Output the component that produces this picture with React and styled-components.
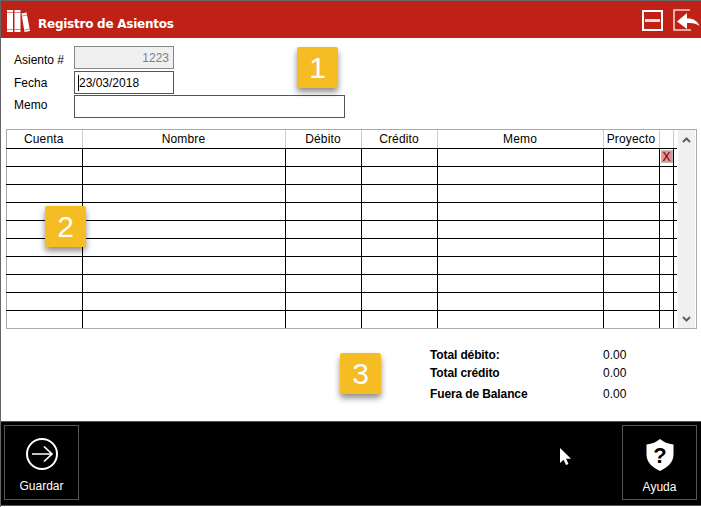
import styled, { createGlobalStyle } from "styled-components";

const GlobalStyle = createGlobalStyle`
  html, body {
    margin: 0;
    padding: 0;
    background: #fff;
    overflow: hidden;
  }
  * { box-sizing: border-box; }
`;

const columns = [
  { id: "cuenta", name: "Cuenta", width: 76 },
  { id: "nombre", name: "Nombre", width: 203 },
  { id: "debito", name: "Débito", width: 76 },
  { id: "credito", name: "Crédito", width: 76 },
  { id: "memo", name: "Memo", width: 166 },
  { id: "proyecto", name: "Proyecto", width: 56 },
  { id: "borrar", name: "", width: 14 },
  { id: "resto", name: "", width: 4 },
];
const rows = Array.from({ length: 10 }, (_, i) => i);
const totals = [
  { label: "Total débito:", value: "0.00", height: 18 },
  { label: "Total crédito", value: "0.00", height: 18 },
  { label: "Fuera de Balance", value: "0.00", height: 24 },
];

export default function App() {
  return (
    <Window>
      <GlobalStyle />
      <TitleBar>
        <BooksIcon />
        <Title>Registro de Asientos</Title>
        <TitleActions>
          <MinimizeIcon />
          <BackIcon />
        </TitleActions>
      </TitleBar>

      <Form>
        <FormRow>
          <Label $drop={5}>Asiento #</Label>
          <ReadOnlyField>1223</ReadOnlyField>
        </FormRow>
        <FormRow>
          <Label>Fecha</Label>
          <Field><Caret />23/03/2018</Field>
        </FormRow>
        <FormRow>
          <Label $lift={4}>Memo</Label>
          <Field $wide />
        </FormRow>
      </Form>

      <GridBox>
        <Table>
          <colgroup>
            {columns.map((c) => (
              <col key={c.id} style={{ width: c.width }} />
            ))}
          </colgroup>
          <thead>
            <tr>
              {columns.map((c) => (
                <HeadCell key={c.id}>{c.name}</HeadCell>
              ))}
            </tr>
          </thead>
          <tbody>
            {rows.map((r) => (
              <tr key={r}>
                {columns.map((c) => (
                  <Cell key={c.id}>
                    {r === 0 && c.id === "borrar" && <DeleteButton>X</DeleteButton>}
                  </Cell>
                ))}
              </tr>
            ))}
          </tbody>
        </Table>
        <ScrollBar>
          <Chevron viewBox="0 0 9 6">
            <path d="M1 5l3.5-3.5L8 5" />
          </Chevron>
          <Chevron viewBox="0 0 9 6">
            <path d="M1 1l3.5 3.5L8 1" />
          </Chevron>
        </ScrollBar>
      </GridBox>

      <Totals>
        {totals.map((t) => (
          <TotalRow key={t.label} $height={t.height}>
            <TotalLabel>{t.label}</TotalLabel>
            <TotalValue>{t.value}</TotalValue>
          </TotalRow>
        ))}
      </Totals>

      <Footer>
        <FooterButton $top={12}>
          <ArrowIcon />
          <span>Guardar</span>
        </FooterButton>
        <FooterButton $top={13}>
          <ShieldIcon />
          <span>Ayuda</span>
        </FooterButton>
        <Pointer viewBox="0 0 13 18">
          <path d="M1 0v15l3.600-3.300L7 17l2.500-1-2.400-5.200H12z" fill="#fff" />
        </Pointer>
      </Footer>

      <Badge $x={296} $y={47}>1</Badge>
      <Badge $x={44} $y={206}>2</Badge>
      <Badge $x={339} $y={353}>3</Badge>
    </Window>
  );
}

function BooksIcon() {
  return (
    <BooksSvg width="23" height="22" viewBox="0 0 23 22">
      <g fill="#fff">
        <rect x="0" y="0" width="6" height="22" />
        <rect x="7.500" y="0" width="6" height="22" />
        <path d="M14.500 3.500l5-1 3.500 18.500-5.500 1z" />
      </g>
      <g fill="#bf2116" opacity="0.55">
        <rect x="0" y="2" width="6" height="1" />
        <rect x="0" y="19" width="6" height="1" />
        <rect x="7.500" y="2" width="6" height="1" />
        <rect x="7.500" y="19" width="6" height="1" />
        <path d="M15 5.500l5-1 .200 1-5 1zM17.600 19.500l5-1 .200 1-5 1z" />
      </g>
    </BooksSvg>
  );
}

function MinimizeIcon() {
  return (
    <svg width="21" height="21" viewBox="0 0 21 21">
      <rect x="1" y="1" width="19" height="19" fill="none" stroke="#fff" strokeWidth="2" />
      <rect x="3" y="9" width="15" height="3" fill="#fff" opacity="0.85" />
    </svg>
  );
}

function BackIcon() {
  return (
    <svg width="27" height="22" viewBox="0 0 27 22">
      <path d="M17 1H1v20h17" fill="none" stroke="#fff" strokeWidth="1.600" opacity="0.8" />
      <path d="M4 12.500L14 4v5.500c5.500-.5 10.500 2 12.500 7.500-3-2.500-7-3.500-12.500-3v6z" fill="#fff" />
    </svg>
  );
}

function ArrowIcon() {
  return (
    <svg width="32" height="32" viewBox="0 0 32 32" fill="none" stroke="#fff">
      <circle cx="16" cy="16" r="15" strokeWidth="2" />
      <path d="M6 16h20M18 8.500l8 7.500-8 7.500" strokeWidth="1.700" />
    </svg>
  );
}

function ShieldIcon() {
  return (
    <svg width="28" height="32" viewBox="0 0 28 32">
      <path
        d="M14 0c3.500 3 8 5 13.500 5.500v10c0 8-6 13-13.500 16.500C6.500 28.500.5 23.500.5 15.500v-10C6 5 10.500 3 14 0z"
        fill="#fff"
      />
      <text x="14" y="24" textAnchor="middle" fontFamily="Liberation Sans" fontWeight="700" fontSize="22" fill="#000">?</text>
    </svg>
  );
}

const Window = styled.div`
  position: relative;
  width: 701px;
  height: 507px;
  display: flex;
  flex-direction: column;
  border-left: 1px solid #666;
  font-family: "Liberation Sans", Arial, sans-serif;
  font-size: 12px;
  color: #000;
  background: #fff;
`;

const TitleBar = styled.div`
  height: 38px;
  flex: none;
  display: flex;
  align-items: center;
  padding: 0 1px 0 6px;
  background: #bf2116;
  border-top: 1px solid #666;
`;

const BooksSvg = styled.svg`
  margin: 3px 8px 0 0;
`;

const Title = styled.div`
  font-family: "DejaVu Sans", Verdana, sans-serif;
  font-weight: 700;
  font-size: 12px;
  letter-spacing: -0.25px;
  color: #fff;
  padding-top: 9px;
`;

const TitleActions = styled.div`
  margin-left: auto;
  display: flex;
  align-items: center;
  gap: 10px;
  padding-top: 1px;
`;

const Form = styled.div`
  height: 91px;
  flex: none;
  padding: 8px 0 0 13px;
  display: flex;
  flex-direction: column;
  gap: 1px;
`;

const FormRow = styled.div`
  display: flex;
  align-items: center;
  height: 23px;
  &:first-child { margin-bottom: 1px; }
`;

const Label = styled.div`
  width: 60px;
  flex: none;
  padding-top: ${(p) => p.$drop || 0}px;
  padding-bottom: ${(p) => p.$lift || 0}px;
`;

const Field = styled.div`
  position: relative;
  width: ${(p) => (p.$wide ? "271px" : "100px")};
  height: 23px;
  padding: 0 0 0 3px;
  display: flex;
  align-items: center;
  border: 1px solid #555;
  background: #fff;
  font-size: 12px;
`;

const ReadOnlyField = styled(Field)`
  justify-content: flex-end;
  padding: 0 4px 0 0;
  border-color: #888;
  background: #f0f0f0;
  color: #808080;
`;

const Caret = styled.span`
  width: 1px;
  height: 16px;
  background: #000;
`;

const GridBox = styled.div`
  flex: none;
  margin-left: 5px;
  width: 691px;
  height: 200px;
  display: flex;
  border: 1px solid #aaa;
`;

const Table = styled.table`
  width: 671px;
  flex: none;
  table-layout: fixed;
  border-collapse: collapse;
  align-self: flex-start;
  margin-left: -1px;
`;

const HeadCell = styled.th`
  height: 18px;
  padding: 0;
  font-weight: 400;
  font-size: 12px;
  letter-spacing: 0.15px;
  text-align: center;
  border-right: 1px solid #ccc;
  border-bottom: 1px solid #000;
  &:last-child { border-right: none; }
`;

const Cell = styled.td`
  height: 18px;
  padding: 0;
  vertical-align: top;
  border-right: 1px solid #000;
  border-bottom: 1px solid #000;
  &:last-child { border-right: none; }
  tr:last-child & { border-bottom: none; }
`;

const DeleteButton = styled.div`
  width: 12px;
  height: 13px;
  margin: 1px 0 0 1px;
  background: #e99090;
  border: 1px solid #bbb;
  color: #600;
  font-size: 12px;
  line-height: 12px;
  text-align: center;
`;

const ScrollBar = styled.div`
  width: 17px;
  margin-left: auto;
  margin-right: 1px;
  background: #f0f0f0;
  display: flex;
  flex-direction: column;
  justify-content: space-between;
  align-items: center;
  padding: 7px 0 6px;
`;

const Chevron = styled.svg`
  width: 9px;
  height: 6px;
  fill: none;
  stroke: #606060;
  stroke-width: 2;
`;

const Totals = styled.div`
  flex: 1;
  padding: 17px 0 0 429px;
  display: flex;
  flex-direction: column;
`;

const TotalRow = styled.div`
  height: ${(p) => p.$height}px;
  display: flex;
  align-items: center;
`;

const TotalLabel = styled.div`
  width: 173px;
  font-weight: 700;
  letter-spacing: -0.12px;
`;

const TotalValue = styled.div``;

const Footer = styled.div`
  position: relative;
  height: 85px;
  flex: none;
  background: #000;
  border-top: 1px solid #555;
  border-bottom: 1px solid #555;
  margin-bottom: 1px;
  padding: 3px 4px 0 3px;
  display: flex;
  justify-content: space-between;
  align-items: flex-start;
`;

const FooterButton = styled.div`
  width: 75px;
  height: 75px;
  border: 1px solid #555;
  display: flex;
  flex-direction: column;
  align-items: center;
  padding-top: ${(p) => p.$top}px;
  gap: 9px;
  color: #fff;
`;

const Pointer = styled.svg`
  position: absolute;
  left: 558px;
  top: 26px;
  width: 13px;
  height: 18px;
`;

const Badge = styled.div`
  position: absolute;
  left: ${(p) => p.$x}px;
  top: ${(p) => p.$y}px;
  width: 41px;
  height: 41px;
  background: #f5bc23;
  border-radius: 2px;
  box-shadow: 0 4px 6px rgba(0, 0, 0, 0.45);
  color: #fff;
  font-family: "Liberation Sans", sans-serif;
  font-size: 30px;
  display: flex;
  align-items: center;
  justify-content: center;
`;
